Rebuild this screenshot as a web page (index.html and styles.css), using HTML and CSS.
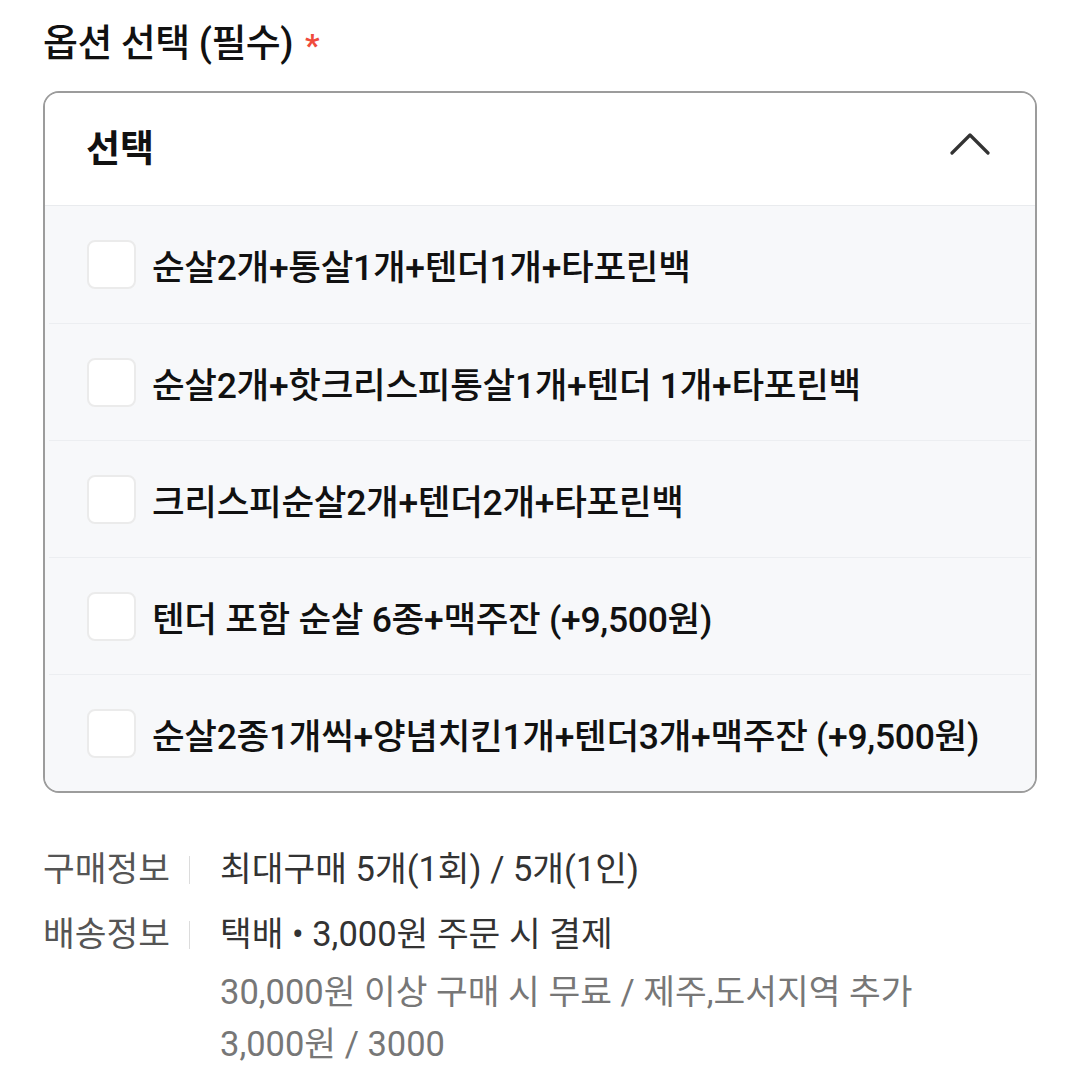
FILE: index.html
```html
<!DOCTYPE html>
<html lang="ko">
<head>
	<meta charset="UTF-8">
	<meta name="viewport" content="width=device-width, initial-scale=1.0">
	<title>옵션 선택</title>
	<link rel="stylesheet" href="styles.css">
</head>
<body>

	<div class="page">
    	<!-- Option title -->
    	<h2 class="option-title">옵션 선택 (필수)<span class="required">*</span></h2>

    	<!-- Option dropdown (opened) -->
    	<div class="option-box">
        	<div class="option-head">
            	<span class="option-head-label">선택</span>
            	<svg class="chevron" width="40" height="24" viewBox="0 0 40 24">
                	<path d="M2 21 L20 3 L38 21" fill="none" stroke="#333" stroke-width="3.2" stroke-linecap="round" stroke-linejoin="round"/>
            	</svg>
        	</div>

        	<ul class="option-list">
            	<li class="option-item"><span class="checkbox"></span><span class="option-name">순살2개+통살1개+텐더1개+타포린백</span></li>
            	<li class="option-item"><span class="checkbox"></span><span class="option-name">순살2개+핫크리스피통살1개+텐더 1개+타포린백</span></li>
            	<li class="option-item"><span class="checkbox"></span><span class="option-name">크리스피순살2개+텐더2개+타포린백</span></li>
            	<li class="option-item"><span class="checkbox"></span><span class="option-name">텐더 포함 순살 6종+맥주잔 (+9,500원)</span></li>
            	<li class="option-item"><span class="checkbox"></span><span class="option-name">순살2종1개씩+양념치킨1개+텐더3개+맥주잔 (+9,500원)</span></li>
        	</ul>
    	</div>

    	<!-- Purchase / delivery info -->
    	<dl class="info">
        	<div class="info-row">
            	<dt class="info-label">구매정보</dt>
            	<dd class="info-value">최대구매 5개(1회) / 5개(1인)</dd>
        	</div>
        	<div class="info-row">
            	<dt class="info-label">배송정보</dt>
            	<dd class="info-value">
                	택배 • 3,000원 주문 시 결제
                	<p class="info-note">30,000원 이상 구매 시 무료 / 제주,도서지역 추가 3,000원 / 3000</p>
            	</dd>
        	</div>
    	</dl>
	</div>

</body>
</html>
```

FILE: styles.css
```css
	body {
    	font-family: Roboto, "Noto Sans CJK KR", sans-serif;
    	background-color: #fff;
    	color: #111;
    	margin: 0;
    	padding: 0;
	}

	.page {
    	padding: 0 43px;
	}

	.option-title {
    	margin: 0;
    	padding: 23px 0 26px;
    	font-size: 38px;
    	font-weight: 500;
    	line-height: 40px;
    	letter-spacing: -0.5px;
    	color: #111;
	}

	.required {
    	color: #ef4b3c;
    	margin-left: 12px;
    	font-weight: 700;
    	font-size: 32px;
	}

	.option-box {
    	border: 2px solid #9c9c9c;
    	border-radius: 16px;
    	overflow: hidden;
	}

	.option-head {
    	height: 112px;
    	display: flex;
    	align-items: center;
    	justify-content: space-between;
    	padding: 0 45px 0 41px;
    	border-bottom: 1px solid #e9ebee;
    	background-color: #fff;
	}

	.option-head-label {
    	font-size: 37px;
    	font-weight: 700;
    	margin-top: -6px;
	}

	.chevron {
    	margin-top: -10px;
	}

	.option-list {
    	list-style: none;
    	margin: 0;
    	padding: 0;
    	background-color: #f7f8fa;
	}

	.option-item {
    	height: 117px;
    	display: flex;
    	align-items: center;
    	padding: 0 42px;
	}

	.option-item + .option-item {
    	height: 116px;
    	border-top: 1px solid #eceef1;
    	margin: 0 4px;
    	padding: 0 38px;
	}

	.checkbox {
    	width: 45px;
    	height: 45px;
    	background-color: #fff;
    	border: 2px solid #ebebeb;
    	border-radius: 8px;
    	flex-shrink: 0;
    	margin-right: 16px;
	}

	.option-name {
    	font-size: 35.5px;
    	font-weight: 500;
    	color: #111;
    	letter-spacing: -0.3px;
	}

	.info {
    	margin: 50px 0 0;
    	font-size: 34.5px;
	}

	.info-row {
    	display: flex;
    	margin-bottom: 13px;
	}

	.info-label {
    	width: 147px;
    	color: #555;
    	line-height: 52px;
    	position: relative;
	}

	.info-label::after {
    	content: "";
    	position: absolute;
    	right: 0;
    	top: 13px;
    	width: 1px;
    	height: 28px;
    	background-color: #dcdcdc;
	}

	.info-value {
    	margin: 0 0 0 30px;
    	color: #333;
    	line-height: 52px;
    	max-width: 720px;
	}

	.info-note {
    	margin: 6px 0 0;
    	color: #777;
	}
```
